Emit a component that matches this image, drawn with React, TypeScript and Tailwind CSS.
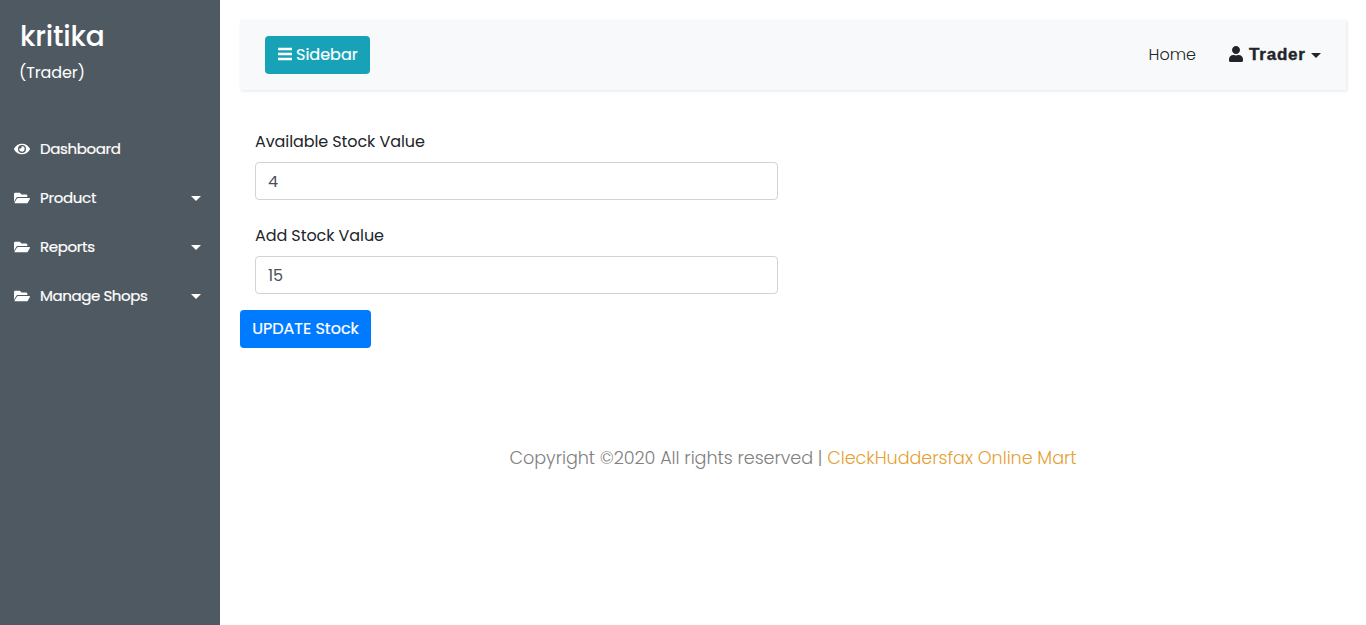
import type { ReactNode } from "react";
import { FaEye, FaFolderOpen, FaUser } from "react-icons/fa";

function Caret({ className = "" }: { className?: string }) {
  return (
    <span className={`block h-0 w-0 border-x-[5px] border-t-[5px] border-x-transparent border-t-current ${className}`} />
  );
}

function MenuItem({
  icon,
  label,
  tracking,
  expandable = false,
}: {
  icon: ReactNode;
  label: string;
  tracking: string;
  expandable?: boolean;
}) {
  return (
    <li>
      <a href="#" className="flex h-[49px] items-center pr-[19.5px] pl-[14px] text-[15px]">
        <span className="w-[26px]">{icon}</span>
        <span className={`grow pt-0.5 whitespace-nowrap [-webkit-text-stroke:0.2px_#fff] ${tracking}`}>{label}</span>
        {expandable && <Caret className="mt-0.5" />}
      </a>
    </li>
  );
}

function Field({ label, value, tracking }: { label: string; value: string; tracking: string }) {
  return (
    <div className="mb-6 w-[523px]">
      <label className={`mb-2 block w-max text-base leading-6 ${tracking}`}>{label}</label>
      <input
        defaultValue={value}
        className="block h-[38px] w-full rounded-[4px] border border-[#ced4da] bg-white px-3 text-base text-[#495057] outline-none"
      />
    </div>
  );
}

export default function App() {
  return (
    <div className="flex h-[625px] w-[1366px] overflow-hidden bg-white font-['Poppins',Inter,sans-serif] text-[#212529]">
      <aside className="w-[220px] shrink-0 bg-[#4f5962] text-white">
        <header className="h-[124px] px-5 pt-5">
          <h3 className="w-max text-[28px] leading-[34px] font-medium tracking-[-0.2px]">kritika</h3>
          <p className="mt-[7px] -ml-px w-max text-base leading-6 tracking-[-0.1px]">(Trader)</p>
        </header>
        <ul>
          <MenuItem icon={<FaEye size={16} />} label="Dashboard" tracking="tracking-[-0.35px]" />
          <MenuItem icon={<FaFolderOpen size={16} />} label="Product" tracking="tracking-[-0.3px]" expandable />
          <MenuItem icon={<FaFolderOpen size={16} />} label="Reports" tracking="tracking-[-0.33px]" expandable />
          <MenuItem icon={<FaFolderOpen size={16} />} label="Manage Shops" tracking="tracking-[-0.4px]" expandable />
        </ul>
      </aside>
      <main className="grow p-5">
        <nav className="mb-10 flex h-[70px] w-[1106px] items-center bg-[#f8f9fa] px-[25px] shadow-[1px_1px_3px_rgba(0,0,0,0.1)]">
          <button className="flex h-[38px] w-[105px] items-center gap-1 rounded-[4px] bg-[#17a2b8] pl-[13px] text-base whitespace-nowrap text-white">
            <svg viewBox="0 0 14 14" className="-mt-0.5 h-[14px] w-[14px]" fill="currentColor">
              <path d="M0 .7h14v2.5H0zM0 5.8h14v2.5H0zM0 10.8h14v2.5H0z" />
            </svg>
            <span className="[-webkit-text-stroke:0.2px_#fff]">Sidebar</span>
          </button>
          <a href="#" className="mr-8 ml-auto text-base font-light">
            Home
          </a>
          <a href="#" className="flex w-[93px] items-center text-base">
            <FaUser size={16} className="-mt-0.5" />
            <span className="ml-[5px] grow font-['Liberation_Sans',sans-serif] text-[17px] leading-6 font-bold tracking-[0.8px] [-webkit-text-stroke:0.4px_#212529]">Trader</span>
            <Caret />
          </a>
        </nav>
        <form>
          <div className="pl-[15px]">
            <Field label="Available Stock Value" value="4" tracking="tracking-[-0.09px]" />
            <Field label="Add Stock Value" value="15" tracking="tracking-[-0.08px]" />
          </div>
          <button type="button" className="-mt-2 block h-[38px] w-[131px] rounded-[4px] bg-[#007bff] text-base whitespace-nowrap text-white [-webkit-text-stroke:0.2px_#fff]">
            UPDATE Stock
          </button>
        </form>
        <footer className="mt-[97px] flex w-[1106px] justify-center text-[17.6px] leading-[27px] font-light tracking-[-0.05px] whitespace-pre text-[#808080]">
          <span>Copyright ©2020 All rights reserved | </span>
          <a href="#" className="text-[#e59f33]">CleckHuddersfax Online Mart</a>
        </footer>
      </main>
    </div>
  );
}
